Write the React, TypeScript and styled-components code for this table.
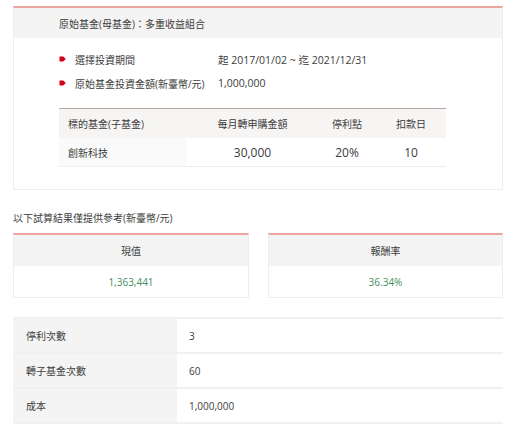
import React from "react";
import styled, { createGlobalStyle } from "styled-components";

const GlobalStyle = createGlobalStyle`
  html, body { margin: 0; padding: 0; background: #fff; }
  body {
    font-family: "Open Sans", "Noto Sans CJK TC", sans-serif;
    font-size: 10px;
    color: #3c3c3c;
  }
  * { box-sizing: border-box; }
`;

const Page = styled.div`
  padding: 6px 3px 0 13px;
  display: flex;
  flex-direction: column;
`;

const Card = styled.section`
  border: 1px solid #eeeeee;
  border-top: 2px solid #eea59f;
  background: #fff;
`;

const CardHeader = styled.div`
  height: 30px;
  background: #f4f4f4;
  display: flex;
  align-items: center;
  padding-left: 45px;
`;

const CardBody = styled.div`
  padding: 9px 56px 22px 45px;
`;

const InfoRow = styled.div`
  display: grid;
  grid-template-columns: 16px 143px 1fr;
  align-items: center;
  height: 24px;
`;

const Value = styled.span<{ $size?: number }>`
  font-size: ${(p) => p.$size ?? 10.5}px;
`;

const FundTable = styled.div`
  margin-top: 13px;
  border-top: 1px solid #b3a9a4;
  display: grid;
  grid-template-columns: 128px 131px 58px 1fr;
`;

const Th = styled.div<{ $align?: string }>`
  height: 29px;
  background: #f7f5f4;
  display: flex;
  align-items: center;
  justify-content: ${(p) => p.$align ?? "center"};
  padding-left: ${(p) => (p.$align === "flex-start" ? "9px" : "0")};
`;

const Td = styled.div<{ $align?: string; $shade?: boolean }>`
  height: 29px;
  border-bottom: 1px solid #eeeeee;
  background: ${(p) => (p.$shade ? "#fafafa" : "#fff")};
  display: flex;
  align-items: center;
  justify-content: ${(p) => p.$align ?? "center"};
  padding-left: ${(p) => (p.$align === "flex-start" ? "9px" : "0")};
  font-size: ${(p) => (p.$align === "flex-start" ? "10px" : "12px")};
`;

const Caption = styled.div`
  margin-top: 17px;
  height: 20px;
  display: flex;
  align-items: center;
`;

const ResultGrid = styled.div`
  margin-top: 6px;
  display: grid;
  grid-template-columns: 236px 1fr;
  gap: 19px;
`;

const ResultCard = styled.div`
  border: 1px solid #eeeeee;
  border-top: 2px solid #eea59f;
`;

const ResultHead = styled.div`
  height: 31px;
  background: #f4f4f4;
  display: flex;
  align-items: center;
  justify-content: center;
`;

const ResultValue = styled.div`
  height: 31px;
  display: flex;
  align-items: center;
  justify-content: center;
  color: #3f8f60;
  font-size: 10px;
`;

const StatTable = styled.div`
  margin-top: 19px;
  display: flex;
  flex-direction: column;
  border-bottom: 2px solid #f0f0f0;
`;

const StatRow = styled.div`
  display: grid;
  grid-template-columns: 164px 1fr;
  height: 35px;
  border-top: 2px solid #f0f0f0;
`;

const StatLabel = styled.div`
  background: #f4f4f4;
  display: flex;
  align-items: center;
  padding-left: 13px;
`;

const StatValue = styled.div`
  display: flex;
  align-items: center;
  padding-left: 12px;
  font-size: 10px;
`;

const Bullet = () => (
  <svg width="7" height="6" viewBox="0 0 7 6">
    <path d="M0.5 0.5 H4.2 L6.8 3 L4.2 5.5 H0.5 Z" fill="#d4001a" />
  </svg>
);

export default function App() {
  return (
    <>
      <GlobalStyle />
      <Page>
        <Card>
          <CardHeader>原始基金(母基金)：多重收益組合</CardHeader>
          <CardBody>
            <InfoRow>
              <Bullet />
              <span>選擇投資期間</span>
              <Value>起 2017/01/02 ~ 迄 2021/12/31</Value>
            </InfoRow>
            <InfoRow>
              <Bullet />
              <span>原始基金投資金額(新臺幣/元)</span>
              <Value>1,000,000</Value>
            </InfoRow>
            <FundTable>
              <Th $align="flex-start">標的基金(子基金)</Th>
              <Th>每月轉申購金額</Th>
              <Th>停利點</Th>
              <Th>扣款日</Th>
              <Td $align="flex-start" $shade>創新科技</Td>
              <Td>30,000</Td>
              <Td>20%</Td>
              <Td>10</Td>
            </FundTable>
          </CardBody>
        </Card>
        <Caption>以下試算結果僅提供參考(新臺幣/元)</Caption>
        <ResultGrid>
          <ResultCard>
            <ResultHead>現值</ResultHead>
            <ResultValue>1,363,441</ResultValue>
          </ResultCard>
          <ResultCard>
            <ResultHead>報酬率</ResultHead>
            <ResultValue>36.34%</ResultValue>
          </ResultCard>
        </ResultGrid>
        <StatTable>
          <StatRow>
            <StatLabel>停利次數</StatLabel>
            <StatValue>3</StatValue>
          </StatRow>
          <StatRow>
            <StatLabel>轉子基金次數</StatLabel>
            <StatValue>60</StatValue>
          </StatRow>
          <StatRow>
            <StatLabel>成本</StatLabel>
            <StatValue>1,000,000</StatValue>
          </StatRow>
        </StatTable>
      </Page>
    </>
  );
}
